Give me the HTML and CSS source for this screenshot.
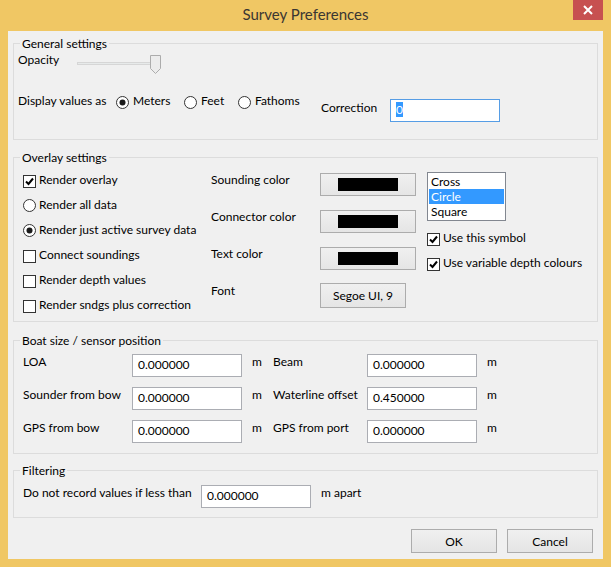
FILE: index.html
```html
<!DOCTYPE html>
<html>
<head>
<meta charset="utf-8">
<title>Survey Preferences</title>
<link rel="stylesheet" href="styles.css">
</head>
<body>
<div class="window">
  <div class="titlebar">
    <div></div>
    <div class="title">Survey Preferences</div>
    <div class="close-wrap">
      <div class="close">
        <svg width="30" height="20" viewBox="0 0 30 20"><path d="M11 6 L19 14 M19 6 L11 14" stroke="#fff" stroke-width="2" fill="none"/></svg>
      </div>
    </div>
  </div>
  <div class="client">
    <div class="group g-general">
      <span class="legend">General settings</span>
      <div class="row-opacity">
        <span class="lbl-opacity">Opacity</span>
        <svg class="slider" width="84" height="19" viewBox="0 0 84 19">
          <rect x="0.5" y="7.5" width="82" height="2" fill="#E7EAEA" stroke="#D6D6D6"/>
          <path d="M73.5 0.5 H83.5 V13.5 L78.5 18.5 L73.5 13.5 Z" fill="#ECECEC" stroke="#ACACAC"/>
        </svg>
      </div>
      <div class="row-display">
        <span class="lbl-display">Display values as</span>
        <div class="opt w-meters">
          <svg class="mark" width="13" height="13" viewBox="0 0 13 13"><circle cx="6.5" cy="6.5" r="6" fill="#fff" stroke="#333"/><circle cx="6.5" cy="6.5" r="3" fill="#1a1a1a"/></svg>
          <span>Meters</span>
        </div>
        <div class="opt w-feet">
          <svg class="mark" width="13" height="13" viewBox="0 0 13 13"><circle cx="6.5" cy="6.5" r="6" fill="#fff" stroke="#333"/></svg>
          <span>Feet</span>
        </div>
        <div class="opt w-fathoms">
          <svg class="mark" width="13" height="13" viewBox="0 0 13 13"><circle cx="6.5" cy="6.5" r="6" fill="#fff" stroke="#333"/></svg>
          <span>Fathoms</span>
        </div>
        <span class="lbl-correction">Correction</span>
        <div class="input focused"><span class="sel">0</span></div>
      </div>
    </div>

    <div class="group g-overlay">
      <span class="legend">Overlay settings</span>
      <div class="overlay-cols">
        <div class="col-checks">
          <div class="check-row">
            <svg class="mark" width="13" height="13" viewBox="0 0 13 13"><rect x="0.5" y="0.5" width="12" height="12" fill="#fff" stroke="#333"/><path d="M3 6.5 L5.5 9 L10 3.5" stroke="#000" stroke-width="2" fill="none"/></svg>
            <span>Render overlay</span>
          </div>
          <div class="check-row">
            <svg class="mark radio" width="13" height="13" viewBox="0 0 13 13"><circle cx="6.5" cy="6.5" r="6" fill="#fff" stroke="#333"/></svg>
            <span>Render all data</span>
          </div>
          <div class="check-row">
            <svg class="mark radio" width="13" height="13" viewBox="0 0 13 13"><circle cx="6.5" cy="6.5" r="6" fill="#fff" stroke="#333"/><circle cx="6.5" cy="6.5" r="3" fill="#1a1a1a"/></svg>
            <span>Render just active survey data</span>
          </div>
          <div class="check-row">
            <svg class="mark" width="13" height="13" viewBox="0 0 13 13"><rect x="0.5" y="0.5" width="12" height="12" fill="#fff" stroke="#333"/></svg>
            <span>Connect soundings</span>
          </div>
          <div class="check-row">
            <svg class="mark" width="13" height="13" viewBox="0 0 13 13"><rect x="0.5" y="0.5" width="12" height="12" fill="#fff" stroke="#333"/></svg>
            <span>Render depth values</span>
          </div>
          <div class="check-row">
            <svg class="mark" width="13" height="13" viewBox="0 0 13 13"><rect x="0.5" y="0.5" width="12" height="12" fill="#fff" stroke="#333"/></svg>
            <span>Render sndgs plus correction</span>
          </div>
        </div>
        <div class="col-colors">
          <span>Sounding color</span>
          <div class="btn btn-color"><span class="swatch"></span></div>
          <span>Connector color</span>
          <div class="btn btn-color"><span class="swatch"></span></div>
          <span>Text color</span>
          <div class="btn btn-color"><span class="swatch"></span></div>
          <span>Font</span>
          <div class="btn btn-font">Segoe UI, 9</div>
        </div>
        <div class="col-symbol">
          <div class="listbox">
            <div class="item">Cross</div>
            <div class="item selected">Circle</div>
            <div class="item">Square</div>
          </div>
          <div class="check-row first">
            <svg class="mark" width="13" height="13" viewBox="0 0 13 13"><rect x="0.5" y="0.5" width="12" height="12" fill="#fff" stroke="#333"/><path d="M3 6.5 L5.5 9 L10 3.5" stroke="#000" stroke-width="2" fill="none"/></svg>
            <span>Use this symbol</span>
          </div>
          <div class="check-row">
            <svg class="mark" width="13" height="13" viewBox="0 0 13 13"><rect x="0.5" y="0.5" width="12" height="12" fill="#fff" stroke="#333"/><path d="M3 6.5 L5.5 9 L10 3.5" stroke="#000" stroke-width="2" fill="none"/></svg>
            <span>Use variable depth colours</span>
          </div>
        </div>
      </div>
    </div>

    <div class="group g-boat">
      <span class="legend">Boat size / sensor position</span>
      <div class="boat-grid">
        <span>LOA</span>
        <div class="input">0.000000</div>
        <span class="unit">m</span>
        <span>Beam</span>
        <div class="input">0.000000</div>
        <span class="unit">m</span>

        <span>Sounder from bow</span>
        <div class="input">0.000000</div>
        <span class="unit">m</span>
        <span>Waterline offset</span>
        <div class="input">0.450000</div>
        <span class="unit">m</span>

        <span>GPS from bow</span>
        <div class="input">0.000000</div>
        <span class="unit">m</span>
        <span>GPS from port</span>
        <div class="input">0.000000</div>
        <span class="unit">m</span>
      </div>
    </div>

    <div class="group g-filter">
      <span class="legend">Filtering</span>
      <div class="filter-row">
        <span class="lbl-filter">Do not record values if less than</span>
        <div class="input">0.000000</div>
        <span class="unit-apart">m apart</span>
      </div>
    </div>

    <div class="footer">
      <div class="btn btn-dlg">OK</div>
      <div class="btn btn-dlg">Cancel</div>
    </div>
  </div>
</div>
</body>
</html>
```

FILE: styles.css
```css
body {
  margin: 0;
  background: #ffffff;
  font-family: Lato, "Liberation Sans", sans-serif;
  font-size: 12px;
  line-height: 15px;
  color: #000;
}

.window {
  width: 611px;
  height: 567px;
  background: #F0C764;
  display: flex;
  flex-direction: column;
}

.titlebar {
  height: 31px;
  display: grid;
  grid-template-columns: 1fr auto 1fr;
  flex: none;
}

.title {
  font-size: 15px;
  line-height: 20px;
  padding-top: 4px;
  color: #3a3632;
}

.close-wrap {
  display: flex;
  justify-content: flex-end;
  align-items: flex-start;
  padding-right: 8px;
}

.close {
  width: 30px;
  height: 20px;
  background: #C75050;
}

.close svg { display: block; }

.client {
  margin: 0 8px;
  height: 528px;
  background: #F0F0F0;
  padding: 12px 5px 0;
  box-sizing: border-box;
  flex: none;
}

.group {
  position: relative;
  border: 1px solid #DCDCDC;
  box-sizing: border-box;
}

.legend {
  position: absolute;
  top: -8px;
  left: 6px;
  padding: 0 2px;
  background: #F0F0F0;
  white-space: nowrap;
}

.mark {
  display: block;
  flex: none;
  margin-top: 3px;
}

/* General */
.g-general {
  height: 97px;
  padding: 8px 0 0 4px;
}

.row-opacity {
  display: flex;
  align-items: flex-start;
}

.lbl-opacity { width: 59px; flex: none; }

.slider {
  display: block;
  margin-top: 3px;
}

.row-display {
  display: flex;
  align-items: flex-start;
  margin-top: 19px;
}

.lbl-display { width: 98px; flex: none; }

.opt {
  display: flex;
  align-items: flex-start;
  gap: 4px;
  flex: none;
}

.w-meters { width: 68px; }
.w-feet { width: 54px; }
.w-fathoms { width: 83px; }

.lbl-correction {
  width: 69px;
  flex: none;
  margin-top: 7px;
}

.input {
  width: 110px;
  height: 23px;
  box-sizing: border-box;
  border: 1px solid #ABADB3;
  background: #ffffff;
  padding: 2px 5px 0;
  line-height: 15px;
  flex: none;
  white-space: nowrap;
}

.input.focused {
  margin-top: 6px;
  border-color: #569DE5;
}

.sel {
  background: #3399FF;
  color: #ffffff;
}

/* Overlay */
.g-overlay {
  height: 165px;
  margin-top: 17px;
  padding: 14px 0 0 9px;
}

.overlay-cols {
  display: flex;
  align-items: flex-start;
}

.col-checks { width: 188px; flex: none; }

.check-row {
  display: flex;
  align-items: flex-start;
  gap: 3px;
  height: 25px;
  white-space: nowrap;
}

.check-row .radio { margin-top: 2px; }

.col-colors {
  display: grid;
  grid-template-columns: 109px 107px;
  grid-auto-rows: 37px;
  align-items: start;
  flex: none;
}

.btn {
  border: 1px solid #ACACAC;
  background: linear-gradient(#F0F0F0, #E5E5E5);
  box-sizing: border-box;
  display: flex;
  align-items: center;
  justify-content: center;
}

.btn-color {
  width: 96px;
  height: 23px;
  margin-top: 1px;
}

.swatch {
  display: block;
  width: 60px;
  height: 13px;
  background: #000;
}

.btn-font {
  width: 86px;
  height: 25px;
}

.col-symbol { flex: none; }

.listbox {
  width: 79px;
  height: 49px;
  box-sizing: border-box;
  border: 1px solid #828790;
  background: #ffffff;
  padding: 1px;
}

.item {
  height: 15px;
  line-height: 15px;
  padding-left: 2px;
}

.item.selected {
  background: #3399FF;
  color: #ffffff;
}

.col-symbol .first { margin-top: 9px; }

/* Boat */
.g-boat {
  height: 114px;
  margin-top: 18px;
  padding: 13px 0 0 9px;
}

.boat-grid {
  display: grid;
  grid-template-columns: 109px 110px 31px 94px 110px auto;
  grid-auto-rows: 23px;
  row-gap: 10px;
  align-items: start;
  white-space: nowrap;
}

.unit { padding-left: 10px; }

/* Filtering */
.g-filter {
  height: 48px;
  margin-top: 16px;
  padding: 14px 0 0 9px;
}

.filter-row {
  display: flex;
  align-items: flex-start;
  white-space: nowrap;
}

.lbl-filter { width: 178px; flex: none; }

.unit-apart { margin-left: 10px; }

/* Footer */
.footer {
  display: flex;
  justify-content: flex-end;
  gap: 10px;
  margin-top: 11px;
  padding-right: 5px;
}

.btn-dlg {
  width: 86px;
  height: 24px;
}
```
